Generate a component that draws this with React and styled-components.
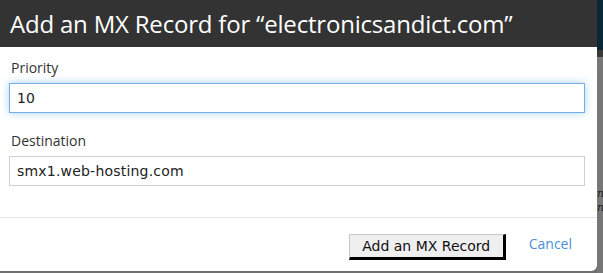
import styled, { createGlobalStyle } from 'styled-components';

const GlobalStyle = createGlobalStyle`
  html, body {
    margin: 0;
    padding: 0;
    background: #6f6f6f;
  }
  * {
    box-sizing: border-box;
  }
`;

const Page = styled.div`
  display: flex;
  width: 603px;
  height: 273px;
  overflow: hidden;
  background: #6f6f6f;
`;

const Modal = styled.div`
  width: 597px;
  height: 271px;
  flex-shrink: 0;
  background: #fff;
  border-radius: 0 0 6px 0;
  display: flex;
  flex-direction: column;
  overflow: hidden;
`;

const Header = styled.div`
  height: 47px;
  background: #333;
  color: #fff;
  padding: 7px 0 0 10px;
  font-family: "Open Sans", "Noto Sans", sans-serif;
  font-size: 24px;
  letter-spacing: -0.2px;
  white-space: nowrap;
`;

const Body = styled.div`
  padding: 11px 12px 0 9px;
  height: 171px;
  border-bottom: 1px solid #e3e3e3;
`;

const Field = styled.div`
  margin-bottom: 18px;
`;

const Label = styled.label`
  display: block;
  padding-left: 2px;
  font-family: "Open Sans", "Noto Sans", sans-serif;
  font-size: 14px;
  color: #333;
  line-height: 20px;
  margin-bottom: 5px;
`;

const Input = styled.input`
  display: block;
  width: 100%;
  height: 30px;
  padding: 0 7px;
  border: 1px solid ${p => (p.$focused ? '#74aee8' : '#cfcfcf')};
  box-shadow: ${p => (p.$focused ? '0 0 8px rgba(102, 175, 233, 0.55)' : 'none')};
  outline: none;
  font-family: "DejaVu Sans", Verdana, sans-serif;
  font-size: 14px;
  letter-spacing: 0.2px;
  color: #222;
  background: #fff;
`;

const Footer = styled.div`
  flex: 1;
  display: flex;
  align-items: center;
  justify-content: flex-end;
  gap: 23px;
  padding: 0 25px 0 0;
`;

const Button = styled.button`
  width: 157px;
  height: 26px;
  padding: 0;
  background: #efefef;
  border-style: solid;
  border-width: 1px 3px 3px 1px;
  border-color: #c8c8c8 #000 #000 #c8c8c8;
  font-family: "DejaVu Sans", Verdana, sans-serif;
  font-size: 14px;
  color: #111;
  margin-top: 4px;
`;

const CancelLink = styled.a`
  font-family: "Open Sans", "Noto Sans", sans-serif;
  font-size: 14px;
  color: #4d90d6;
  text-decoration: none;
  margin-bottom: 2px;
`;

const Backdrop = styled.div`
  flex: 1;
  display: flex;
  flex-direction: column;
`;

const BackdropTop = styled.div`
  height: 50px;
  background: #0c2736;
`;

const BackdropBar = styled.div`
  height: 7px;
  background: #3a3a3a;
`;

const BackdropBody = styled.div`
  flex: 1;
  background: #777;
  padding-top: 130px;
  font-family: "DejaVu Serif", serif;
  font-style: italic;
  font-size: 11px;
  line-height: 14px;
  color: #222;
`;

export default function App() {
  return (
    <>
      <GlobalStyle />
      <Page>
        <Modal>
          <Header>Add an MX Record for “electronicsandict.com”</Header>
          <Body>
            <Field>
              <Label>Priority</Label>
              <Input $focused defaultValue="10" />
            </Field>
            <Field>
              <Label>Destination</Label>
              <Input defaultValue="smx1.web-hosting.com" />
            </Field>
          </Body>
          <Footer>
            <Button>Add an MX Record</Button>
            <CancelLink href="#">Cancel</CancelLink>
          </Footer>
        </Modal>
        <Backdrop>
          <BackdropTop />
          <BackdropBar />
          <BackdropBody>
            <div>n</div>
            <div>n</div>
          </BackdropBody>
        </Backdrop>
      </Page>
    </>
  );
}
